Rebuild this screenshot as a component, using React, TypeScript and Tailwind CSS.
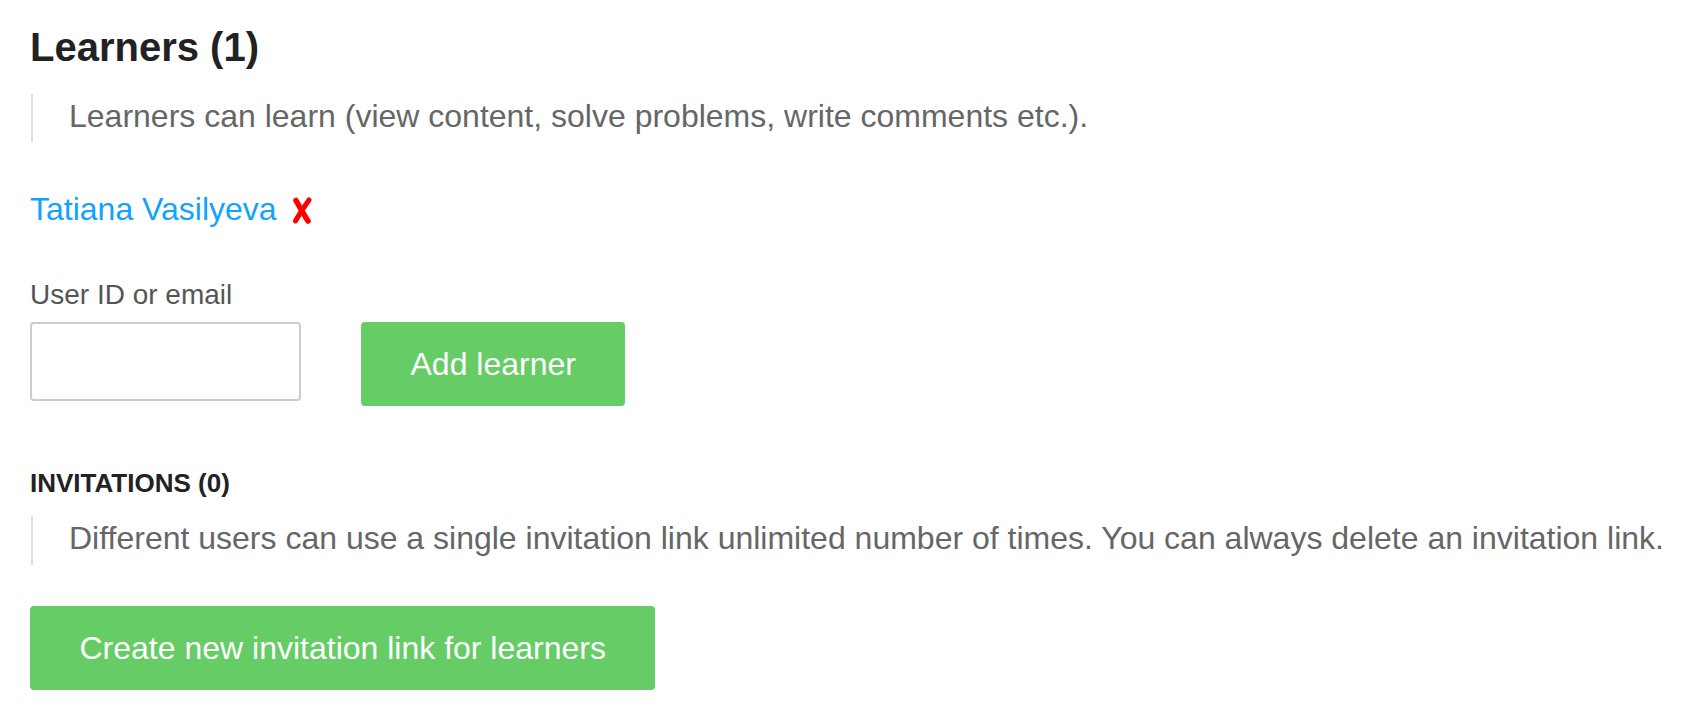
import React, { useState } from 'react';

function CrossMark() {
  return (
    <svg width="20" height="27" viewBox="0 0 20 27" className="ml-[15px] mt-[3px]" aria-hidden="true">
      <path d="M4 3.5 C7.5 10, 11.5 17, 16 24" stroke="#ff0000" strokeWidth="5.5" strokeLinecap="round" fill="none" />
      <path d="M17 3 C12.5 9.5, 8 16, 3.5 24" stroke="#ff0000" strokeWidth="5" strokeLinecap="round" fill="none" />
    </svg>
  );
}

export default function App() {
  const [userId, setUserId] = useState('');

  return (
    <div className="min-h-screen bg-white pl-[30px] pt-[23px] font-['Liberation_Sans',Arial,sans-serif]">
      <h2 className="text-[40px] leading-[48px] font-bold text-[#222222]">Learners (1)</h2>

      <div className="mt-[23px] ml-[1px] h-[48px] border-l-2 border-[#dddddd] pl-[36px]">
        <p className="text-[32px] leading-[44px] text-[#666666] whitespace-nowrap">
          Learners can learn (view content, solve problems, write comments etc.).
        </p>
      </div>

      <div className="mt-[45px] flex items-center h-[44px]">
        <a href="#" className="text-[32px] leading-[44px] text-[#13a2ff]">Tatiana Vasilyeva</a>
        <CrossMark />
      </div>

      <label className="mt-[46px] block text-[28px] leading-[36px] text-[#555555]">User ID or email</label>

      <div className="mt-[9px] flex items-start gap-[60px]">
        <input
          type="text"
          value={userId}
          onChange={(e) => setUserId(e.target.value)}
          className="w-[271px] h-[79px] rounded-[4px] border-2 border-[#cccccc] bg-white px-3 text-[28px] outline-none"
        />
        <button className="h-[84px] px-[49.5px] rounded-[4px] bg-[#66cc66] text-[32px] text-white">
          Add learner
        </button>
      </div>

      <h3 className="mt-[62px] text-[26px] leading-[30px] font-bold text-[#222222]">INVITATIONS (0)</h3>

      <div className="mt-[18px] ml-[1px] h-[49px] border-l-2 border-[#dddddd] pl-[36px]">
        <p className="text-[32px] leading-[44px] text-[#666666] whitespace-nowrap">
          Different users can use a single invitation link unlimited number of times. You can always delete an invitation link.
        </p>
      </div>

      <button className="mt-[41px] h-[84px] px-[49.5px] rounded-[4px] bg-[#66cc66] text-[32px] text-white">
        Create new invitation link for learners
      </button>
    </div>
  );
}
